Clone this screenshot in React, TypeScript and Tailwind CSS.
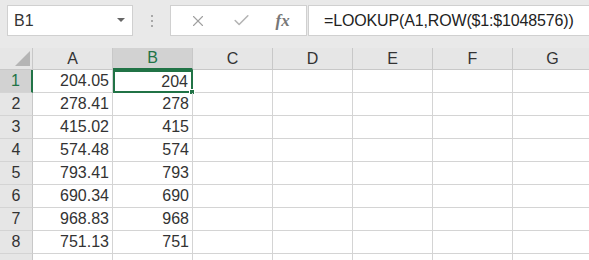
import { X, Check } from "lucide-react";

const colsA = ["204.05", "278.41", "415.02", "574.48", "793.41", "690.34", "968.83", "751.13"];
const colsB = ["204", "278", "415", "574", "793", "690", "968", "751"];
const letters = ["A", "B", "C", "D", "E", "F", "G"];

export default function App() {
  return (
    <div
      className="w-[589px] h-[260px] overflow-hidden bg-white text-[#333]"
      style={{ fontFamily: '"Liberation Sans", "Noto Sans CJK SC", sans-serif' }}
    >
      {/* formula bar */}
      <div className="h-[48px] bg-[#e9e9e9] flex items-start pt-[5px] pl-[7px]">
        <div className="w-[126px] h-[31px] bg-white border border-[#d0d0d0] flex items-center justify-between pl-[6px] pr-[7px]">
          <span className="text-[16px] text-[#333]">B1</span>
          <svg width="8" height="5" viewBox="0 0 8 5">
            <path d="M0 0 L8 0 L4 4 Z" fill="#666" />
          </svg>
        </div>
        <div className="w-[37px] h-[31px] flex flex-col items-center justify-center gap-[3px]">
          <span className="w-[2px] h-[2px] bg-[#a8a8a8]" />
          <span className="w-[2px] h-[2px] bg-[#a8a8a8]" />
          <span className="w-[2px] h-[2px] bg-[#a8a8a8]" />
        </div>
        <div className="w-[137px] h-[31px] bg-white border border-[#d0d0d0] flex items-center justify-around pl-[6px] pr-[4px]">
          <X size={18} strokeWidth={1.5} className="text-[#a0a0a0]" />
          <Check size={19} strokeWidth={2} className="text-[#b4b4b4]" />
          <span
            className="text-[17px] italic text-[#777] font-bold"
            style={{ fontFamily: '"Liberation Serif", serif' }}
          >
            fx
          </span>
        </div>
        <div className="flex-1 h-[31px] bg-white border border-[#d0d0d0] border-r-0 ml-[1px] flex items-center pl-[15px]">
          <span className="text-[16px] tracking-[-0.15px] text-[#222] whitespace-nowrap">=LOOKUP(A1,ROW($1:$1048576))</span>
        </div>
      </div>

      {/* grid */}
      <div className="flex flex-col">
        <div className="flex h-[22px] bg-[#e6e6e6]">
          <div className="w-[33px] shrink-0 relative border-r border-[#c8c8c8] border-b">
            <svg className="absolute right-[2px] bottom-[3px]" width="15" height="15" viewBox="0 0 15 15">
              <path d="M15 0 L15 15 L0 15 Z" fill="#b5b5b5" />
            </svg>
          </div>
          {letters.map((l) => (
            <div
              key={l}
              className={`w-[80px] shrink-0 flex items-center justify-center text-[16px] border-r border-[#c8c8c8] ${
                l === "B" ? "bg-[#d2d2d2] text-[#217346] border-b-2 border-b-[#217346]" : "border-b border-b-[#c8c8c8] text-[#333]"
              }`}
            >
              {l}
            </div>
          ))}
        </div>
        {colsA.map((a, i) => (
          <div key={i} className="flex h-[23px]">
            <div
              className={`w-[33px] shrink-0 flex items-center justify-center text-[16px] border-b border-[#d4d4d4] ${
                i === 0 ? "bg-[#d2d2d2] text-[#217346] border-r-2 border-r-[#217346]" : "bg-[#e6e6e6] text-[#333] border-r border-r-[#c8c8c8]"
              }`}
            >
              {i + 1}
            </div>
            <div className="w-[80px] shrink-0 flex items-center justify-end pr-[3px] text-[16px] border-r border-b border-[#d4d4d4]">
              {a}
            </div>
            <div
              className={`w-[80px] shrink-0 flex items-center justify-end pr-[3px] text-[16px] relative ${
                i === 0 ? "border-2 border-[#217346]" : "border-r border-b border-[#d4d4d4]"
              }`}
            >
              {colsB[i]}
              {i === 0 && (
                <span className="absolute right-[-4px] bottom-[-4px] w-[6px] h-[6px] bg-[#217346] border border-white" />
              )}
            </div>
            {[0, 1, 2, 3, 4].map((c) => (
              <div key={c} className="w-[80px] shrink-0 border-r border-b border-[#d4d4d4]" />
            ))}
          </div>
        ))}
        <div className="flex h-[23px]">
          <div className="w-[33px] shrink-0 bg-[#e6e6e6] border-r border-[#c8c8c8]" />
          {letters.map((l) => (
            <div key={l} className="w-[80px] shrink-0 border-r border-[#d4d4d4]" />
          ))}
        </div>
      </div>
    </div>
  );
}
